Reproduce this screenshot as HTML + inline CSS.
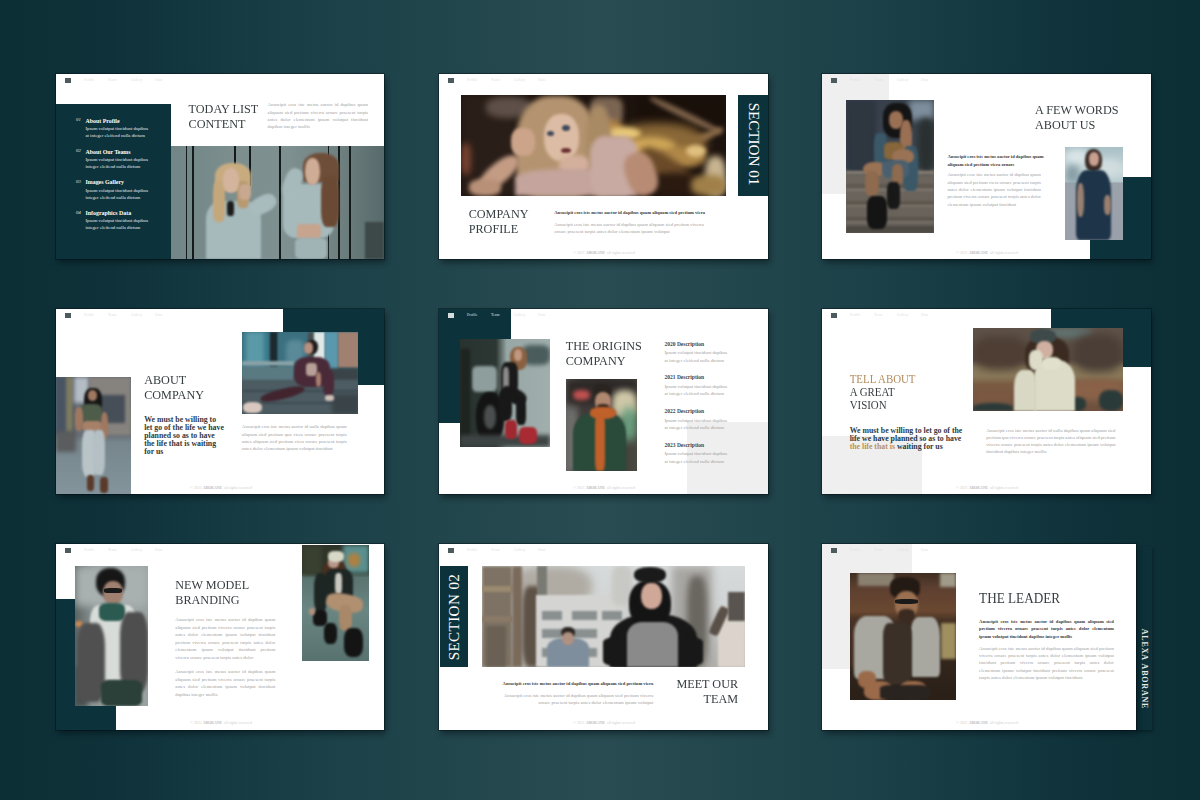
<!DOCTYPE html>
<html><head><meta charset="utf-8">
<style>
*{margin:0;padding:0;box-sizing:border-box}
html,body{width:1200px;height:800px;overflow:hidden}
body{font-family:"Liberation Serif",serif;position:relative;
background:linear-gradient(90deg,#0c2f36 0%,#0f323a 9%,#1c4148 28%,#284c51 50%,#1c4148 72%,#0f323a 91%,#0c2f36 100%);}
.s{position:absolute;width:329px;height:185px;background:#fff;overflow:visible;
box-shadow:0 0 0 1px rgba(0,10,15,.4),2px 4px 6px rgba(0,10,15,.45)}
.a{position:absolute}
.dk{position:absolute;background:#0c333c}
.lg{position:absolute;background:#efefef}
.logo{position:absolute;left:9px;top:4px;width:6px;height:5px;background:#4d5b5f}
.nav{position:absolute;top:3.6px;font-size:3.8px;line-height:5px;color:#e2e2e2;white-space:nowrap}
.ttl{position:absolute;font-size:12.2px;line-height:13.5px;color:#363e41;white-space:nowrap;transform:scaleY(1.08);transform-origin:0 0}
.p{position:absolute;margin-top:0.6px;font-size:4.75px;line-height:7.3px;color:#a0a0a0;white-space:nowrap}
.b{position:absolute;margin-top:0.6px;font-size:4.6px;line-height:7.4px;color:#3c3c3c;font-weight:bold;white-space:nowrap}
.q{position:absolute;font-size:7.8px;line-height:8.2px;color:#33393c;font-weight:bold;white-space:nowrap}
.ft{position:absolute;left:134px;top:177px;font-size:3.9px;line-height:5px;color:#cfcfcf;white-space:nowrap}
.ph{position:absolute;overflow:hidden}
.ph div{position:absolute}
.bl{filter:blur(1px)}
.bl2{filter:blur(2px)}
.sec{position:absolute;font-size:15.1px;line-height:15px;color:#fff;white-space:nowrap}
</style></head><body>
<!-- SLIDE 1 -->
<div class="s" style="left:56px;top:74px;width:328px">
  <div class="logo"></div>
  <div class="nav" style="left:28px">Profile</div><div class="nav" style="left:52px">Team</div><div class="nav" style="left:75px">Gallery</div><div class="nav" style="left:99px">Data</div>
  <div class="dk" style="left:0;top:29.5px;width:115px;height:155.5px"></div>
  <div class="ph" id="p1" style="left:115px;top:72px;width:213px;height:113px;background:linear-gradient(90deg,#728687 0%,#7c8e8e 30%,#7f9090 55%,#6e7f7f 80%,#58696b 100%)"><div style="left:14.6px;top:0px;width:1.8px;height:113px;background:#141a1a;filter:blur(0.3px);"></div><div style="left:21px;top:0px;width:1.8px;height:113px;background:#141a1a;filter:blur(0.3px);"></div><div style="left:63px;top:0px;width:1.8px;height:20px;background:#141a1a;filter:blur(0.3px);"></div><div style="left:78px;top:0px;width:1.8px;height:40px;background:#141a1a;filter:blur(0.3px);"></div><div style="left:108px;top:0px;width:1.8px;height:113px;background:#141a1a;filter:blur(0.3px);"></div><div style="left:156.7px;top:0px;width:1.8px;height:113px;background:#141a1a;filter:blur(0.3px);"></div><div style="left:166.8px;top:0px;width:1.8px;height:113px;background:#141a1a;filter:blur(0.3px);"></div><div style="left:177.8px;top:0px;width:1.8px;height:113px;background:#141a1a;filter:blur(0.3px);"></div><div style="left:194px;top:76px;width:19px;height:37px;background:#3d4848;filter:blur(1px);"></div><div style="left:35px;top:55px;width:55px;height:58px;background:#a6b9bb;border-radius:30% 30% 0 0;filter:blur(1px);"></div><div style="left:78px;top:50px;width:28px;height:17px;background:#a8bbbd;border-radius:40%;filter:blur(1px);transform:rotate(-28deg)"></div><div style="left:44px;top:17px;width:36px;height:28px;background:#c8ac80;border-radius:45% 45% 20% 20%;filter:blur(1px);"></div><div style="left:42px;top:35px;width:12px;height:41px;background:#c4a87c;border-radius:30%;filter:blur(1px);"></div><div style="left:66px;top:35px;width:12px;height:27px;background:#b89a70;border-radius:30%;filter:blur(1px);"></div><div style="left:52px;top:22px;width:16px;height:25px;background:#d4b49c;border-radius:45%;filter:blur(1px);"></div><div style="left:68px;top:38px;width:12px;height:16px;background:#c8a890;border-radius:40%;filter:blur(1px);"></div><div style="left:56px;top:55px;width:7px;height:15px;background:#1c1c1c;border-radius:30%;filter:blur(0.8px);"></div><div style="left:132px;top:7px;width:36px;height:29px;background:#6e4e38;border-radius:45% 45% 10% 10%;filter:blur(1px);"></div><div style="left:112px;top:38px;width:51px;height:54px;background:#a6babc;border-radius:25%;filter:blur(1px);"></div><div style="left:113px;top:22px;width:17px;height:30px;background:#a6babc;border-radius:40%;filter:blur(1px);transform:rotate(20deg)"></div><div style="left:150px;top:30px;width:18px;height:51px;background:#6a4a34;border-radius:30%;filter:blur(1px);"></div><div style="left:134px;top:12px;width:15px;height:27px;background:#ceac96;border-radius:45%;filter:blur(1px);"></div><div style="left:126px;top:78px;width:24px;height:15px;background:#c6a48e;border-radius:20%;filter:blur(1px);"></div><div style="left:124px;top:92px;width:32px;height:21px;background:#a0b4b6;border-radius:20%;filter:blur(1px);"></div></div><!--/p1-->
  <div class="ttl" style="left:132.6px;top:27.9px">TODAY LIST<br>CONTENT</div>
  <div class="p" style="left:211.6px;top:26.8px;"><div style="width:100.4px;white-space:nowrap;text-align:justify;text-align-last:justify;white-space:normal;word-spacing:-0.4px">Ansucipit eros iste metus auctor id dapibus quam</div><div style="width:100.4px;white-space:nowrap;text-align:justify;text-align-last:justify;white-space:normal;word-spacing:-0.4px">aliquam sied pretium viverra ornare praesent turpis</div><div style="width:100.4px;white-space:nowrap;text-align:justify;text-align-last:justify;white-space:normal;word-spacing:-0.4px">antes dolor elementum ipsum volutpat tincidunt</div><div style="width:100.4px;white-space:nowrap;">dapibus integer mollis</div></div>
  <div class="a" style="left:20.5px;top:43.9px;color:#fff;white-space:nowrap">
    <div style="position:absolute;left:-0.5px;top:-0.5px;font-size:4.8px;line-height:5px;font-style:italic;color:#dfe6e8">01</div>
    <div style="position:absolute;left:9px;top:0;font-size:5.9px;line-height:7px;font-weight:bold">About Profile</div>
    <div style="position:absolute;left:9px;top:8.3px;font-size:4.75px;line-height:6.9px;color:#e6ebec">Ipsum volutpat tincidunt dapibus<br>at integer eleifend nulla dictum</div>
  </div>
  <div class="a" style="left:20.5px;top:74.6px;color:#fff;white-space:nowrap">
    <div style="position:absolute;left:-0.5px;top:-0.5px;font-size:4.8px;line-height:5px;font-style:italic;color:#dfe6e8">02</div>
    <div style="position:absolute;left:9px;top:0;font-size:5.9px;line-height:7px;font-weight:bold">About Our Teams</div>
    <div style="position:absolute;left:9px;top:8.3px;font-size:4.75px;line-height:6.9px;color:#e6ebec">Ipsum volutpat tincidunt dapibus<br>integer eleifend nulla dictum</div>
  </div>
  <div class="a" style="left:20.5px;top:105.3px;color:#fff;white-space:nowrap">
    <div style="position:absolute;left:-0.5px;top:-0.5px;font-size:4.8px;line-height:5px;font-style:italic;color:#dfe6e8">03</div>
    <div style="position:absolute;left:9px;top:0;font-size:5.9px;line-height:7px;font-weight:bold">Images Gallery</div>
    <div style="position:absolute;left:9px;top:8.3px;font-size:4.75px;line-height:6.9px;color:#e6ebec">Ipsum volutpat tincidunt dapibus<br>integer eleifend nulla dictum</div>
  </div>
  <div class="a" style="left:20.5px;top:136px;color:#fff;white-space:nowrap">
    <div style="position:absolute;left:-0.5px;top:-0.5px;font-size:4.8px;line-height:5px;font-style:italic;color:#dfe6e8">04</div>
    <div style="position:absolute;left:9px;top:0;font-size:5.9px;line-height:7px;font-weight:bold">Infographics Data</div>
    <div style="position:absolute;left:9px;top:8.3px;font-size:4.75px;line-height:6.9px;color:#e6ebec">Ipsum volutpat tincidunt dapibus<br>integer eleifend nulla dictum</div>
  </div>
</div>

<!-- SLIDE 2 -->
<div class="s" style="left:439px;top:74px">
  <div class="logo"></div>
  <div class="nav" style="left:28px">Profile</div><div class="nav" style="left:52px">Team</div><div class="nav" style="left:75px">Gallery</div><div class="nav" style="left:99px">Data</div>
  <div class="ph" id="p2" style="left:21.5px;top:21.4px;width:265px;height:101px;background:#1e140f"><div style="left:0px;top:0px;width:55px;height:101px;background:#2a1e18;filter:blur(3px);"></div><div style="left:25px;top:2px;width:46px;height:21px;background:#5e5048;border-radius:40%;filter:blur(3px);"></div><div style="left:0px;top:48px;width:10px;height:32px;background:#7a4430;border-radius:40%;filter:blur(3px);"></div><div style="left:129px;top:2px;width:33px;height:28px;background:#7a6452;border-radius:30%;filter:blur(2.5px);"></div><div style="left:135px;top:25px;width:27px;height:17px;background:#b88a4c;border-radius:40%;filter:blur(3px);"></div><div style="left:175px;top:0px;width:90px;height:40px;background:#1a100a;filter:blur(3px);"></div><div style="left:185px;top:17px;width:80px;height:7px;background:#7a6048;border-radius:40%;filter:blur(2px);transform:rotate(26deg)"></div><div style="left:205px;top:42px;width:60px;height:8px;background:#8a6a48;border-radius:40%;filter:blur(2px);transform:rotate(-25deg)"></div><div style="left:150px;top:28px;width:95px;height:44px;background:#8a6838;border-radius:45%;filter:blur(5px);"></div><div style="left:145px;top:32px;width:35px;height:13px;background:#e8c878;border-radius:50%;filter:blur(2.5px);"></div><div style="left:165px;top:42px;width:50px;height:20px;background:#d0a858;border-radius:50%;filter:blur(3px);"></div><div style="left:195px;top:52px;width:50px;height:20px;background:#b08848;border-radius:45%;filter:blur(3px);"></div><div style="left:225px;top:50px;width:20px;height:12px;background:#e0c080;border-radius:50%;filter:blur(2px);"></div><div style="left:175px;top:62px;width:60px;height:22px;background:#6a4a28;border-radius:40%;filter:blur(3px);transform:rotate(35deg)"></div><div style="left:190px;top:78px;width:50px;height:23px;background:#2a1a10;border-radius:40%;filter:blur(3px);"></div><div style="left:244px;top:61px;width:21px;height:40px;background:#c8b490;border-radius:40%;filter:blur(3px);"></div><div style="left:230px;top:80px;width:35px;height:21px;background:#a08048;border-radius:40%;filter:blur(3px);"></div><div style="left:55px;top:1px;width:81px;height:101px;background:#b49470;border-radius:42% 42% 30% 30%;filter:blur(2.5px);"></div><div style="left:125px;top:10px;width:25px;height:90px;background:#a88a64;border-radius:40%;filter:blur(2.5px);"></div><div style="left:83px;top:19px;width:35px;height:47px;background:#dcbca4;border-radius:45%;filter:blur(1.5px);"></div><div style="left:86px;top:36px;width:7px;height:5px;background:#40485a;border-radius:50%;filter:blur(0.8px);"></div><div style="left:101px;top:30px;width:8px;height:6px;background:#40485a;border-radius:50%;filter:blur(0.8px);"></div><div style="left:100px;top:53px;width:10px;height:5px;background:#6a2e30;border-radius:50%;filter:blur(0.8px);"></div><div style="left:98px;top:60px;width:30px;height:19px;background:#d4b09c;border-radius:40%;filter:blur(2px);"></div><div style="left:54px;top:74px;width:123px;height:27px;background:#c4a49c;border-radius:35% 35% 0 0;filter:blur(2px);"></div><div style="left:129px;top:41px;width:48px;height:60px;background:#c8aaa2;border-radius:30%;filter:blur(2px);"></div><div style="left:165px;top:57px;width:30px;height:44px;background:#b88c74;border-radius:40%;filter:blur(2px);transform:rotate(-20deg)"></div><div style="left:50px;top:33px;width:24.5px;height:28px;background:#cca48a;border-radius:40%;filter:blur(1.5px);"></div><div style="left:14px;top:68px;width:48px;height:20px;background:#c49c84;border-radius:45%;filter:blur(2px);transform:rotate(-40deg)"></div><div style="left:8px;top:84px;width:32px;height:17px;background:#b89078;border-radius:40%;filter:blur(2px);"></div></div><!--/p2-->
  <div class="dk" style="left:299px;top:21.4px;width:30px;height:101px"></div>
  <div class="sec" style="left:314px;top:70.3px;transform:translate(-50%,-50%) rotate(90deg)">SECTION 01</div>
  <div class="ttl" style="left:29.7px;top:132.6px">COMPANY<br>PROFILE</div>
  <div class="b" style="left:115.3px;top:134.8px">Ansucipit eros iste metus auctor id dapibus quam aliquam sied pretium viera</div>
  <div class="p" style="left:115.3px;top:146.1px;line-height:7.6px">Ansucipit eros iste metus auctor id dapibus quam aliquam sied pretium viverra<br>ornare praesent turpis antes dolor elementum ipsum volutpat</div>
  <div class="ft">© 2021 <b style="color:#bdbdbd">ABORANE</b> &nbsp;all rights reserved</div>
</div>

<!-- SLIDE 3 -->
<div class="s" style="left:822px;top:74px">
  <div class="lg" style="left:0;top:0;width:67px;height:120px"></div>
  <div class="logo"></div>
  <div class="nav" style="left:28px">Profile</div><div class="nav" style="left:52px">Team</div><div class="nav" style="left:75px">Gallery</div><div class="nav" style="left:99px">Data</div>
  <div class="ph" id="p3a" style="left:23.6px;top:26px;width:88px;height:133px;background:linear-gradient(180deg,#363f4a 0%,#3c4650 50%,#6c665e 54%,#67615a 100%)"><div style="left:0px;top:0px;width:30px;height:72px;background:#2e3640;filter:blur(2px);"></div><div style="left:63px;top:0px;width:25px;height:20px;background:#7e8e9c;filter:blur(3px);"></div><div style="left:72px;top:18px;width:16px;height:54px;background:#2a3030;border-radius:30%;filter:blur(3px);"></div><div style="left:0px;top:71px;width:88px;height:3px;background:#847d74;filter:blur(0.8px);"></div><div style="left:0px;top:84px;width:88px;height:4px;background:#5e5850;filter:blur(1px);"></div><div style="left:0px;top:89px;width:88px;height:2px;background:#7e776e;filter:blur(0.8px);"></div><div style="left:0px;top:101px;width:88px;height:4px;background:#5c564e;filter:blur(1px);"></div><div style="left:0px;top:105px;width:88px;height:2px;background:#7a736a;filter:blur(0.8px);"></div><div style="left:0px;top:117px;width:88px;height:4px;background:#5a544c;filter:blur(1px);"></div><div style="left:0px;top:121px;width:88px;height:2px;background:#76706a;filter:blur(0.8px);"></div><div style="left:0px;top:126px;width:88px;height:7px;background:#4e4a44;filter:blur(1px);"></div><div style="left:37.7px;top:3px;width:29px;height:34.5px;background:#141414;border-radius:40%;filter:blur(1.2px);"></div><div style="left:43px;top:11px;width:14.6px;height:18px;background:#9a7054;border-radius:45%;filter:blur(0.8px);"></div><div style="left:54px;top:20px;width:12.7px;height:34.7px;background:#9a7054;border-radius:40%;filter:blur(0.8px);"></div><div style="left:28.6px;top:33px;width:12.7px;height:34.4px;background:#3a5868;border-radius:30%;filter:blur(1px);"></div><div style="left:57.6px;top:45.6px;width:14.4px;height:45.4px;background:#3a5868;border-radius:30%;filter:blur(1px);"></div><div style="left:38.6px;top:42px;width:19px;height:18px;background:#86663a;border-radius:30%;filter:blur(0.8px);"></div><div style="left:46.7px;top:49px;width:21.8px;height:14.8px;background:#9a7254;border-radius:45%;filter:blur(1px);"></div><div style="left:17.8px;top:62px;width:23.5px;height:14.4px;background:#9a7254;border-radius:45%;filter:blur(1px);"></div><div style="left:36px;top:60px;width:27px;height:18px;background:#4a6070;border-radius:30%;filter:blur(1px);"></div><div style="left:19.6px;top:71px;width:13.4px;height:25.4px;background:#8e6a4e;border-radius:35%;filter:blur(1px);"></div><div style="left:46.7px;top:63.8px;width:10.9px;height:21.7px;background:#8e6a4e;border-radius:35%;filter:blur(1px);"></div><div style="left:21.4px;top:96.4px;width:19.9px;height:32.6px;background:#141414;border-radius:30%;filter:blur(1px);"></div><div style="left:41.3px;top:82px;width:12.7px;height:27px;background:#181818;border-radius:30%;filter:blur(1px);"></div></div><!--/p3a-->
  <div class="dk" style="left:268px;top:103px;width:61px;height:82px"></div>
  <div class="ph" id="p3b" style="left:243.2px;top:73.2px;width:57.5px;height:92.8px;background:linear-gradient(180deg,#a8c0c6 0%,#c8d8da 25%,#b8ccd0 37%,#9aa2ac 39%,#9aa0aa 100%)"><div style="left:0px;top:2px;width:25px;height:16px;background:#d8e4e6;border-radius:50%;filter:blur(3px);"></div><div style="left:30px;top:12px;width:27px;height:18px;background:#d0dcde;border-radius:50%;filter:blur(3px);"></div><div style="left:0px;top:18px;width:15px;height:18px;background:#8aa0a8;border-radius:40%;filter:blur(3px);"></div><div style="left:20px;top:2px;width:17px;height:23px;background:#3a2a24;border-radius:45%;filter:blur(1px);"></div><div style="left:23.5px;top:5px;width:10px;height:14px;background:#c8a090;border-radius:45%;filter:blur(0.8px);"></div><div style="left:11px;top:23px;width:35px;height:70px;background:#1e3448;border-radius:30% 30% 10% 10%;filter:blur(1.2px);"></div><div style="left:12px;top:36px;width:7px;height:34px;background:#9a8070;border-radius:40%;filter:blur(0.8px);"></div><div style="left:39px;top:48px;width:7px;height:20px;background:#9a8070;border-radius:40%;filter:blur(0.8px);"></div></div><!--/p3b-->
  <div class="ttl" style="left:213px;top:29px">A FEW WORDS<br>ABOUT US</div>
  <div class="b" style="left:125.4px;top:78.5px"><div style="width:96.3px;white-space:nowrap;text-align:justify;text-align-last:justify;white-space:normal;word-spacing:-0.4px">Ansucipit eros iste metus auctor id dapibus quam</div><div style="width:96.3px;white-space:nowrap;">aliquam sied pretium viera ornare</div></div>
  <div class="p" style="left:125.4px;top:96.85px"><div style="width:93.5px;white-space:nowrap;text-align:justify;text-align-last:justify;white-space:normal;word-spacing:-0.4px">Ansucipit eros iste metus auctor id dapibus quam</div><div style="width:93.5px;white-space:nowrap;text-align:justify;text-align-last:justify;white-space:normal;word-spacing:-0.4px">aliquam sied pretium viera ornare praesent turpis</div><div style="width:93.5px;white-space:nowrap;text-align:justify;text-align-last:justify;white-space:normal;word-spacing:-0.4px">antes dolor elementum ipsum volutpat tincidunt</div><div style="width:93.5px;white-space:nowrap;text-align:justify;text-align-last:justify;white-space:normal;word-spacing:-0.4px">pretium viverra ornare praesent turpis antes dolor</div><div style="width:93.5px;white-space:nowrap;">elementum ipsum volutpat tincidunt</div></div>
  <div class="ft">© 2021 <b style="color:#bdbdbd">ABORANE</b> &nbsp;all rights reserved</div>
</div>

<!-- SLIDE 4 -->
<div class="s" style="left:56px;top:309px;width:328px">
  <div class="logo"></div>
  <div class="nav" style="left:28px">Profile</div><div class="nav" style="left:52px">Team</div><div class="nav" style="left:75px">Gallery</div><div class="nav" style="left:99px">Data</div>
  <div class="dk" style="left:226.6px;top:0;width:101.4px;height:76px"></div>
  <div class="ph" id="p4a" style="left:0;top:68.3px;width:75px;height:116.7px;background:linear-gradient(180deg,#5a6470 0%,#6a7078 50%,#76868c 56%,#84949c 100%)"><div style="left:0px;top:0px;width:18px;height:58px;background:#485462;filter:blur(1.5px);"></div><div style="left:10px;top:0px;width:7px;height:56px;background:#7e7a60;filter:blur(1.5px);"></div><div style="left:18px;top:0px;width:15px;height:26px;background:#b4bcc4;filter:blur(2px);"></div><div style="left:33px;top:0px;width:42px;height:58px;background:#86827e;filter:blur(1.5px);"></div><div style="left:42px;top:18px;width:27px;height:28px;background:#464e58;filter:blur(1.5px);"></div><div style="left:0px;top:54px;width:20px;height:21px;background:#5a5c5e;filter:blur(2px);"></div><div style="left:28px;top:11px;width:18px;height:26px;background:#161616;border-radius:40%;filter:blur(1px);"></div><div style="left:32px;top:13px;width:9px;height:11px;background:#a07860;border-radius:45%;filter:blur(0.8px);"></div><div style="left:24px;top:27px;width:22px;height:19px;background:#4e5c4a;border-radius:30%;filter:blur(1px);"></div><div style="left:26px;top:44px;width:20px;height:10px;background:#a88068;border-radius:30%;filter:blur(1px);"></div><div style="left:19px;top:30px;width:8px;height:24px;background:#a07860;border-radius:40%;filter:blur(1px);"></div><div style="left:45px;top:35px;width:7px;height:27px;background:#a07860;border-radius:40%;filter:blur(1px);"></div><div style="left:26px;top:53px;width:15px;height:47px;background:#b8c4c8;border-radius:30%;filter:blur(1px);"></div><div style="left:37px;top:53px;width:12px;height:45px;background:#b4c0c4;border-radius:30%;filter:blur(1px);"></div><div style="left:31px;top:98px;width:7px;height:16px;background:#5a3a2a;border-radius:30%;filter:blur(0.8px);"></div><div style="left:44px;top:100px;width:8px;height:16px;background:#5a3a2a;border-radius:30%;filter:blur(0.8px);"></div></div><!--/p4a-->
  <div class="ph" id="p4b" style="left:185.9px;top:22.9px;width:116.6px;height:82.4px;background:linear-gradient(180deg,#3a6a78 0%,#3a6a78 50%,#4a5a60 54%,#465258 100%)"><div style="left:0px;top:0px;width:28px;height:43px;background:#3a7888;filter:blur(1.5px);"></div><div style="left:4px;top:0px;width:18px;height:36px;background:#5a9aa8;filter:blur(2px);"></div><div style="left:28px;top:0px;width:8px;height:41px;background:#1c2a30;filter:blur(1.2px);"></div><div style="left:36px;top:0px;width:30px;height:40px;background:#3c7080;filter:blur(1.5px);"></div><div style="left:44px;top:8px;width:18px;height:26px;background:#5a8a98;border-radius:30%;filter:blur(2px);"></div><div style="left:66px;top:0px;width:6px;height:40px;background:#4a5050;filter:blur(1px);"></div><div style="left:72px;top:0px;width:11px;height:29px;background:#e0e8e8;filter:blur(1.2px);"></div><div style="left:83px;top:0px;width:13px;height:41px;background:#5a98ae;filter:blur(1.2px);"></div><div style="left:96px;top:0px;width:21px;height:36px;background:#a08070;filter:blur(1.2px);"></div><div style="left:86px;top:36px;width:31px;height:13px;background:#3a4448;filter:blur(1.5px);"></div><div style="left:0px;top:29px;width:52px;height:5px;background:#8aa2a8;filter:blur(1px);"></div><div style="left:0px;top:34px;width:52px;height:15px;background:#5a7a82;filter:blur(1.5px);"></div><div style="left:0px;top:48px;width:117px;height:34.4px;background:#4c5c62;filter:blur(1.5px);"></div><div style="left:0px;top:58px;width:117px;height:2px;background:#3e4c52;filter:blur(1px);"></div><div style="left:0px;top:70px;width:117px;height:2px;background:#3e4c52;filter:blur(1px);"></div><div style="left:90px;top:62px;width:27px;height:20.4px;background:#3a4448;filter:blur(2px);"></div><div style="left:52.5px;top:25px;width:35.5px;height:30px;background:#4a2a38;border-radius:35%;filter:blur(1px);"></div><div style="left:81px;top:38px;width:10.7px;height:26px;background:#4a2a38;border-radius:35%;filter:blur(1px);"></div><div style="left:18px;top:57px;width:45px;height:10px;background:#42242f;border-radius:45%;filter:blur(1px);transform:rotate(-14deg)"></div><div style="left:64px;top:8px;width:12px;height:14px;background:#1e1a1a;border-radius:45%;filter:blur(0.8px);"></div><div style="left:62px;top:10px;width:9px;height:12px;background:#b89080;border-radius:45%;filter:blur(0.8px);"></div><div style="left:64px;top:31px;width:11px;height:13px;background:#b8a098;border-radius:30%;filter:blur(0.8px);"></div><div style="left:74px;top:40.6px;width:5px;height:14.4px;background:#a88070;border-radius:40%;filter:blur(0.8px);"></div><div style="left:1.4px;top:70px;width:19px;height:11px;background:#d8c8c0;border-radius:40%;filter:blur(1px);"></div><div style="left:83.4px;top:63px;width:8.3px;height:6px;background:#d0c0b8;border-radius:40%;filter:blur(0.8px);"></div></div><!--/p4b-->
  <div class="ttl" style="left:88.2px;top:64.3px">ABOUT<br>COMPANY</div>
  <div class="q" style="left:88.2px;top:106.5px">We must be willing to<br>let go of the life <span style="color:#1c3a44">we have</span><br>planned so as to have<br>the life that is <span style="color:#1c3a44">waiting</span><br>for us</div>
  <div class="p" style="left:185.8px;top:113.8px"><div style="width:105px;white-space:nowrap;text-align:justify;text-align-last:justify;white-space:normal;word-spacing:-0.4px">Ansucipit eros iste metus auctor id nulla dapibus quam</div><div style="width:105px;white-space:nowrap;text-align:justify;text-align-last:justify;white-space:normal;word-spacing:-0.4px">aliquam sied pretium qua viera ornare praesent turpis</div><div style="width:105px;white-space:nowrap;text-align:justify;text-align-last:justify;white-space:normal;word-spacing:-0.4px">antes aliquam sied pretium viera ornare praesent turpis</div><div style="width:105px;white-space:nowrap;">antes dolor elementum ipsum volutpat tincidunt</div></div>
  <div class="ft">© 2021 <b style="color:#bdbdbd">ABORANE</b> &nbsp;all rights reserved</div>
</div>

<!-- SLIDE 5 -->
<div class="s" style="left:439px;top:309px">
  <div class="dk" style="left:0;top:0;width:72px;height:113.6px"></div>
  <div class="logo" style="background:#d5dcde"></div>
  <div class="nav" style="left:28px;color:#d8e0e2">Profile</div><div class="nav" style="left:52px;color:#d8e0e2">Team</div><div class="nav" style="left:75px">Gallery</div><div class="nav" style="left:99px">Data</div>
  <div class="lg" style="left:247.5px;top:112.8px;width:81.5px;height:72.2px"></div>
  <div class="ph" id="p5a" style="left:20.7px;top:30px;width:90px;height:108.3px;background:linear-gradient(90deg,#28322e 0%,#2c3632 40%,#98a8a6 52%,#a0aeac 100%)"><div style="left:62px;top:6px;width:28px;height:20px;background:#4a5c5c;border-radius:30%;filter:blur(2px);"></div><div style="left:12px;top:27px;width:25px;height:26px;background:#8e9e9c;border-radius:20%;filter:blur(1.5px);"></div><div style="left:0px;top:10px;width:10px;height:90px;background:#1e2420;filter:blur(1.5px);"></div><div style="left:16px;top:53px;width:28px;height:51px;background:#141414;border-radius:45%;filter:blur(1.2px);"></div><div style="left:24px;top:66px;width:12px;height:24px;background:#4a4e4e;border-radius:45%;filter:blur(1.5px);"></div><div style="left:0px;top:96px;width:90px;height:12.3px;background:#3e4444;filter:blur(2px);"></div><div style="left:50px;top:8px;width:17px;height:23px;background:#8a6040;border-radius:40%;filter:blur(1px);"></div><div style="left:54px;top:10px;width:8px;height:12px;background:#c09880;border-radius:45%;filter:blur(0.8px);"></div><div style="left:41px;top:23px;width:17px;height:33px;background:#1a1a1a;border-radius:30%;filter:blur(1px);"></div><div style="left:43px;top:28px;width:6px;height:27px;background:#8a8a8a;border-radius:30%;filter:blur(1px);"></div><div style="left:38px;top:52px;width:14px;height:30px;background:#181818;border-radius:30%;filter:blur(1px);"></div><div style="left:40px;top:49px;width:27px;height:15px;background:#181818;border-radius:40%;filter:blur(1px);transform:rotate(25deg)"></div><div style="left:56px;top:60px;width:10px;height:26px;background:#181818;border-radius:30%;filter:blur(1px);"></div><div style="left:45px;top:81px;width:12px;height:19px;background:#a02830;border-radius:30%;filter:blur(1px);"></div><div style="left:59px;top:88px;width:18px;height:17px;background:#a82a32;border-radius:30%;filter:blur(1px);"></div></div><!--/p5a-->
  <div class="ph" id="p5b" style="left:127px;top:69.8px;width:70.6px;height:91.9px;background:linear-gradient(90deg,#626260 0%,#403c3a 22%,#3a3634 60%,#4a4a40 100%)"><div style="left:0px;top:0px;width:70.6px;height:25px;background:#2e2a28;filter:blur(3px);"></div><div style="left:7px;top:11px;width:17px;height:10px;background:#c05050;border-radius:40%;filter:blur(2px);"></div><div style="left:46px;top:11px;width:24.6px;height:28px;background:#d0c8a8;border-radius:40%;filter:blur(3px);"></div><div style="left:55px;top:28px;width:15.6px;height:34px;background:#6aa080;border-radius:40%;filter:blur(4px);"></div><div style="left:0px;top:30px;width:11px;height:62px;background:#6e6e6c;filter:blur(3px);"></div><div style="left:28px;top:5px;width:17px;height:13px;background:#2a2420;border-radius:40%;filter:blur(1px);"></div><div style="left:29px;top:13px;width:16px;height:19px;background:#b08870;border-radius:45%;filter:blur(1px);"></div><div style="left:31px;top:25px;width:12px;height:8px;background:#3a2a22;border-radius:40%;filter:blur(1px);"></div><div style="left:7px;top:34px;width:53px;height:58px;background:#2a4a3a;border-radius:35% 35% 0 0;filter:blur(1.2px);"></div><div style="left:24px;top:28px;width:26px;height:12px;background:#c0602a;border-radius:40%;filter:blur(1px);"></div><div style="left:29px;top:36px;width:10px;height:56px;background:#c0602a;border-radius:20%;filter:blur(1px);"></div></div><!--/p5b-->
  <div class="ttl" style="left:126.7px;top:30.1px">THE ORIGINS<br>COMPANY</div>
  <div class="a" style="left:225.5px;top:31.1px">
    <div class="b" style="left:0;top:0;font-size:5.5px;line-height:7.5px;color:#444">2020 Description</div>
    <div class="p" style="left:0;top:8.7px;line-height:7.4px">Ipsum volutpat tincidunt dapibus<br>at integer eleifend nulla dictum</div>
  </div>
  <div class="a" style="left:225.5px;top:64.8px">
    <div class="b" style="left:0;top:0;font-size:5.5px;line-height:7.5px;color:#444">2021 Description</div>
    <div class="p" style="left:0;top:8.7px;line-height:7.4px">Ipsum volutpat tincidunt dapibus<br>at integer eleifend nulla dictum</div>
  </div>
  <div class="a" style="left:225.5px;top:98.5px">
    <div class="b" style="left:0;top:0;font-size:5.5px;line-height:7.5px;color:#444">2022 Description</div>
    <div class="p" style="left:0;top:8.7px;line-height:7.4px">Ipsum volutpat tincidunt dapibus<br>at integer eleifend nulla dictum</div>
  </div>
  <div class="a" style="left:225.5px;top:132.2px">
    <div class="b" style="left:0;top:0;font-size:5.5px;line-height:7.5px;color:#444">2023 Description</div>
    <div class="p" style="left:0;top:8.7px;line-height:7.4px">Ipsum volutpat tincidunt dapibus<br>at integer eleifend nulla dictum</div>
  </div>
  <div class="ft">© 2021 <b style="color:#bdbdbd">ABORANE</b> &nbsp;all rights reserved</div>
</div>

<!-- SLIDE 6 -->
<div class="s" style="left:822px;top:309px">
  <div class="logo"></div>
  <div class="nav" style="left:28px">Profile</div><div class="nav" style="left:52px">Team</div><div class="nav" style="left:75px">Gallery</div><div class="nav" style="left:99px">Data</div>
  <div class="dk" style="left:229px;top:0;width:100px;height:57.5px"></div>
  <div class="lg" style="left:0;top:127.3px;width:99.7px;height:57.7px"></div>
  <div class="ph" id="p6" style="left:151.3px;top:18.6px;width:149.6px;height:83.2px;background:linear-gradient(180deg,#5e5248 0%,#5a4c42 38%,#86785a 47%,#8a7a5a 58%,#7a5c42 68%,#6e5040 100%)"><div style="left:70px;top:0px;width:50px;height:10px;background:#607472;border-radius:40%;filter:blur(3px);"></div><div style="left:0px;top:8px;width:55px;height:34px;background:#4e3e34;border-radius:40%;filter:blur(4px);"></div><div style="left:100px;top:6px;width:49.6px;height:38px;background:#4a3e36;border-radius:40%;filter:blur(4px);"></div><div style="left:95px;top:52px;width:54.6px;height:20px;background:#8a6248;border-radius:30%;filter:blur(3px);"></div><div style="left:0px;top:62px;width:40px;height:14px;background:#7a5842;border-radius:30%;filter:blur(3px);"></div><div style="left:0px;top:75px;width:40px;height:8.2px;background:#2a3a38;border-radius:50% 50% 0 0;filter:blur(1.5px);"></div><div style="left:126px;top:62px;width:23.6px;height:21.2px;background:#2a3a38;border-radius:40%;filter:blur(1.5px);"></div><div style="left:96px;top:69px;width:17px;height:14.2px;background:#2a3a38;border-radius:40%;filter:blur(1.5px);"></div><div style="left:52px;top:9px;width:44px;height:39px;background:#3a2a20;border-radius:40%;filter:blur(1.5px);"></div><div style="left:57px;top:1px;width:25.5px;height:15px;background:#3e4a4a;border-radius:45%;filter:blur(1px);"></div><div style="left:63px;top:13px;width:17px;height:18px;background:#d0b0a0;border-radius:45%;filter:blur(1px);"></div><div style="left:60.5px;top:32px;width:41.5px;height:51.2px;background:#dcdcc8;border-radius:35% 40% 0 0;filter:blur(1.2px);"></div><div style="left:41px;top:42px;width:22px;height:41.2px;background:#d8d8c4;border-radius:40% 30% 0 0;filter:blur(1.2px);"></div><div style="left:56px;top:22.7px;width:14px;height:19.3px;background:#dcdcc8;border-radius:40%;filter:blur(1px);"></div><div style="left:69px;top:29.6px;width:19px;height:12.4px;background:#e0e0cc;border-radius:40%;filter:blur(1px);"></div></div><!--/p6-->
  <div class="ttl" style="left:27.7px;top:62.8px;font-size:10.9px;line-height:12.2px"><span style="color:#b38b5c">TELL ABOUT</span><br>A GREAT<br>VISION</div>
  <div class="q" style="left:27.7px;top:117.8px">We must be willing to let go of the<br>life <span style="color:#1c3a44">we have planned</span> so as to have<br><span style="color:#b8915f">the life that is</span> <span style="color:#1c3a44">waiting</span> for us</div>
  <div class="p" style="left:164.2px;top:117px"><div style="width:129.3px;white-space:nowrap;text-align:justify;text-align-last:justify;white-space:normal;word-spacing:-0.4px">Ansucipit eros iste metus auctor id nulla dapibus quam aliquam sied</div><div style="width:129.3px;white-space:nowrap;text-align:justify;text-align-last:justify;white-space:normal;word-spacing:-0.4px">pretium qua viverra ornare praesent turpis antes aliquam sied pretium</div><div style="width:129.3px;white-space:nowrap;text-align:justify;text-align-last:justify;white-space:normal;word-spacing:-0.4px">viverra ornare praesent turpis antes dolor elementum ipsum volutpat</div><div style="width:129.3px;white-space:nowrap;">tincidunt dapibus integer mollis</div></div>
  <div class="ft">© 2021 <b style="color:#bdbdbd">ABORANE</b> &nbsp;all rights reserved</div>
</div>

<!-- SLIDE 7 -->
<div class="s" style="left:56px;top:544px;width:328px;height:186px">
  <div class="logo"></div>
  <div class="nav" style="left:28px">Profile</div><div class="nav" style="left:52px">Team</div><div class="nav" style="left:75px">Gallery</div><div class="nav" style="left:99px">Data</div>
  <div class="dk" style="left:0;top:55px;width:60px;height:131px"></div>
  <div class="ph" id="p7a" style="left:18.8px;top:22.3px;width:73px;height:140px;background:linear-gradient(90deg,#5a6262 0%,#8a9292 25%,#a0a8a8 60%,#98a0a0 100%)"><div style="left:0px;top:0px;width:73px;height:40px;background:#a8b0b0;filter:blur(4px);"></div><div style="left:0px;top:55px;width:8px;height:6px;background:#d08a50;border-radius:50%;filter:blur(1.5px);"></div><div style="left:0px;top:100px;width:12px;height:40px;background:#4a5050;filter:blur(2px);"></div><div style="left:21px;top:2px;width:29px;height:29px;background:#161616;border-radius:45%;filter:blur(1.5px);"></div><div style="left:28px;top:15px;width:20px;height:24px;background:#a08070;border-radius:45%;filter:blur(1px);"></div><div style="left:29px;top:22px;width:18px;height:5px;background:#1a1a1a;border-radius:30%;filter:blur(0.5px);"></div><div style="left:15px;top:39px;width:46px;height:75px;background:#d8dcd8;border-radius:20%;filter:blur(1px);"></div><div style="left:24px;top:37px;width:26px;height:18px;background:#2a5a50;border-radius:30%;filter:blur(1px);"></div><div style="left:2px;top:57px;width:28px;height:79px;background:#505050;border-radius:30%;filter:blur(1.5px);"></div><div style="left:45px;top:46px;width:28px;height:81px;background:#4e4e4e;border-radius:30%;filter:blur(1.5px);"></div><div style="left:26px;top:114px;width:41px;height:26px;background:#2a4038;border-radius:20%;filter:blur(1px);"></div></div><!--/p7a-->
  <div class="ph" id="p7b" style="left:246.3px;top:0.5px;width:67.2px;height:116.5px;background:linear-gradient(180deg,#2e3428 0%,#2e3428 23%,#5a7470 28%,#6a8682 55%,#587270 100%)"><div style="left:41px;top:0px;width:26.2px;height:28px;background:#5a9090;filter:blur(2px);"></div><div style="left:46px;top:8px;width:12px;height:14px;background:#b08040;border-radius:40%;filter:blur(2px);"></div><div style="left:0px;top:0px;width:20px;height:30px;background:#3a4030;filter:blur(2px);"></div><div style="left:20px;top:15px;width:24.7px;height:34px;background:#4a3020;border-radius:40%;filter:blur(1.2px);"></div><div style="left:11.4px;top:28px;width:13.6px;height:40.6px;background:#1e2624;border-radius:35%;filter:blur(1px);"></div><div style="left:22px;top:24.7px;width:29px;height:35.8px;background:#1e2624;border-radius:30%;filter:blur(1px);"></div><div style="left:33px;top:28px;width:7px;height:21px;background:#c8c8c0;border-radius:30%;filter:blur(1px);"></div><div style="left:26px;top:13px;width:10.6px;height:10px;background:#b8988a;border-radius:45%;filter:blur(0.8px);"></div><div style="left:26px;top:6.8px;width:15.5px;height:10.6px;background:#d8d8c8;border-radius:40%;filter:blur(0.8px);"></div><div style="left:23.6px;top:49px;width:37.4px;height:18px;background:#b09070;border-radius:40%;filter:blur(1px);transform:rotate(10deg)"></div><div style="left:36.6px;top:60px;width:13px;height:26.5px;background:#a88868;border-radius:35%;filter:blur(1px);"></div><div style="left:22px;top:78px;width:13px;height:21.5px;background:#141414;border-radius:35%;filter:blur(1px);"></div><div style="left:41.5px;top:83px;width:19.5px;height:29.5px;background:#141414;border-radius:35%;filter:blur(1px);"></div><div style="left:10.6px;top:65px;width:14.4px;height:16.6px;background:#141414;border-radius:30%;filter:blur(1px);"></div><div style="left:7px;top:63px;width:6px;height:7px;background:#b09080;border-radius:40%;filter:blur(0.8px);"></div></div><!--/p7b-->
  <div class="ttl" style="left:119.3px;top:33.6px">NEW MODEL<br>BRANDING</div>
  <div class="p" style="left:119.3px;top:71.9px;line-height:7.42px"><div style="width:100.1px;white-space:nowrap;text-align:justify;text-align-last:justify;white-space:normal;word-spacing:-0.4px">Ansucipit eros iste metus auctor id dapibus quam</div><div style="width:100.1px;white-space:nowrap;text-align:justify;text-align-last:justify;white-space:normal;word-spacing:-0.4px">aliquam sied pretium viverra ornare praesent turpis</div><div style="width:100.1px;white-space:nowrap;text-align:justify;text-align-last:justify;white-space:normal;word-spacing:-0.4px">antes dolor elementum ipsum volutpat tincidunt</div><div style="width:100.1px;white-space:nowrap;text-align:justify;text-align-last:justify;white-space:normal;word-spacing:-0.4px">pretium viverra ornare praesent turpis antes dolor</div><div style="width:100.1px;white-space:nowrap;text-align:justify;text-align-last:justify;white-space:normal;word-spacing:-0.4px">elementum ipsum volutpat tincidunt pretium</div><div style="width:100.1px;white-space:nowrap;">viverra ornare praesent turpis antes dolor</div></div>
  <div class="p" style="left:119.3px;top:123.9px;line-height:7.42px"><div style="width:100.1px;white-space:nowrap;text-align:justify;text-align-last:justify;white-space:normal;word-spacing:-0.4px">Ansucipit eros iste metus auctor id dapibus quam</div><div style="width:100.1px;white-space:nowrap;text-align:justify;text-align-last:justify;white-space:normal;word-spacing:-0.4px">aliquam sied pretium viverra ornare praesent turpis</div><div style="width:100.1px;white-space:nowrap;text-align:justify;text-align-last:justify;white-space:normal;word-spacing:-0.4px">antes dolor elementum ipsum volutpat tincidunt</div><div style="width:100.1px;white-space:nowrap;">dapibus integer mollis</div></div>
  <div class="ft">© 2021 <b style="color:#bdbdbd">ABORANE</b> &nbsp;all rights reserved</div>
</div>

<!-- SLIDE 8 -->
<div class="s" style="left:439px;top:544px;height:186px">
  <div class="logo"></div>
  <div class="nav" style="left:28px">Profile</div><div class="nav" style="left:52px">Team</div><div class="nav" style="left:75px">Gallery</div><div class="nav" style="left:99px">Data</div>
  <div class="dk" style="left:1px;top:21.6px;width:28.3px;height:101px"></div>
  <div class="sec" style="left:15.3px;top:73px;letter-spacing:0.4px;transform:translate(-50%,-50%) rotate(-90deg)">SECTION 02</div>
  <div class="ph" id="p8" style="left:43px;top:21.8px;width:263.1px;height:101.5px;background:linear-gradient(180deg,#d6dada 0%,#d0d4d4 40%,#b0b0ac 100%)"><div style="left:28px;top:0px;width:82px;height:40px;background:#b0aca4;border-radius:40%;filter:blur(4px);"></div><div style="left:0px;top:0px;width:30px;height:101.5px;background:#7e7264;filter:blur(1.5px);"></div><div style="left:0px;top:20px;width:30px;height:6px;background:#9a8a70;filter:blur(1px);"></div><div style="left:0px;top:50px;width:30px;height:6px;background:#8a7a68;filter:blur(1px);"></div><div style="left:4px;top:60px;width:20px;height:41.5px;background:#6a6054;filter:blur(1.5px);"></div><div style="left:30px;top:0px;width:10px;height:101.5px;background:#7a6a5a;filter:blur(1.5px);"></div><div style="left:40px;top:20px;width:22px;height:81.5px;background:#5e5246;border-radius:30%;filter:blur(2px);"></div><div style="left:55px;top:0px;width:10px;height:101.5px;background:#7a7a74;filter:blur(1px);"></div><div style="left:54px;top:29px;width:88px;height:72.5px;background:#d4d4d2;filter:blur(1.2px);"></div><div style="left:60px;top:45px;width:20px;height:9px;background:#8a9090;filter:blur(1px);"></div><div style="left:90px;top:45px;width:25px;height:9px;background:#8a9090;filter:blur(1px);"></div><div style="left:120px;top:45px;width:20px;height:9px;background:#8a9090;filter:blur(1px);"></div><div style="left:60px;top:63px;width:20px;height:9px;background:#8a9090;filter:blur(1px);"></div><div style="left:90px;top:63px;width:25px;height:9px;background:#8a9090;filter:blur(1px);"></div><div style="left:60px;top:82px;width:20px;height:9px;background:#8a9090;filter:blur(1px);"></div><div style="left:90px;top:82px;width:25px;height:9px;background:#8a9090;filter:blur(1px);"></div><div style="left:130px;top:0px;width:20px;height:40px;background:#c8c8c4;border-radius:30%;filter:blur(2px);"></div><div style="left:190px;top:0px;width:40px;height:101.5px;background:#a8a6a2;filter:blur(4px);"></div><div style="left:205px;top:10px;width:20px;height:91.5px;background:#6a6660;border-radius:30%;filter:blur(3px);"></div><div style="left:236px;top:40px;width:27.1px;height:61.5px;background:#dcd4cc;filter:blur(1.2px);"></div><div style="left:246px;top:26px;width:17.1px;height:29px;background:#5a5450;filter:blur(1.2px);"></div><div style="left:222px;top:50px;width:30px;height:10px;background:#5a5048;border-radius:20%;filter:blur(1.2px);transform:rotate(-65deg)"></div><div style="left:65px;top:72px;width:42px;height:29.5px;background:#7e8e9c;border-radius:35% 35% 0 0;filter:blur(1.2px);"></div><div style="left:79px;top:61px;width:14px;height:11px;background:#2a2420;border-radius:45%;filter:blur(1px);"></div><div style="left:80px;top:66px;width:12px;height:13px;background:#b09080;border-radius:45%;filter:blur(0.8px);"></div><div style="left:128px;top:48px;width:87px;height:53.5px;background:#181818;border-radius:45% 45% 0 0;filter:blur(1.2px);"></div><div style="left:121px;top:70px;width:100px;height:31.5px;background:#181818;border-radius:20%;filter:blur(1.2px);"></div><div style="left:147px;top:14px;width:42px;height:48px;background:#141414;border-radius:45%;filter:blur(1.2px);"></div><div style="left:152px;top:1px;width:32px;height:16px;background:#1a1a1a;border-radius:45%;filter:blur(1px);"></div><div style="left:159px;top:17px;width:21px;height:26px;background:#d0a898;border-radius:45%;filter:blur(1px);"></div><div style="left:145px;top:56px;width:51px;height:45.5px;background:#8a8a8a;border-radius:30% 30% 0 0;filter:blur(1.2px);"></div></div><!--/p8-->
  <div class="ttl" style="right:29.9px;top:133.3px;text-align:right;transform-origin:100% 0">MEET OUR<br>TEAM</div>
  <div class="b" style="right:114.7px;top:135.8px;text-align:right">Ansucipit eros iste metus auctor id dapibus quam aliquam sied pretium viera</div>
  <div class="p" style="right:114.7px;top:147.2px;text-align:right;line-height:7px">Ansucipit eros iste metus auctor id dapibus quam aliquam sied pretium viverra<br>ornare praesent turpis antes dolor elementum ipsum volutpat</div>
  <div class="ft">© 2021 <b style="color:#bdbdbd">ABORANE</b> &nbsp;all rights reserved</div>
</div>

<!-- SLIDE 9 -->
<div class="dk" style="left:1136px;top:547px;width:15.5px;height:182.5px;background:#0d3039;box-shadow:1px 2px 3px rgba(0,10,15,.4)"></div>
<div class="s" style="left:822px;top:544px;width:314px;height:186px">
  <div class="lg" style="left:0;top:0;width:90px;height:124.7px"></div>
  <div class="logo"></div>
  <div class="nav" style="left:28px">Profile</div><div class="nav" style="left:52px">Team</div><div class="nav" style="left:75px">Gallery</div><div class="nav" style="left:99px">Data</div>
  <div class="ph" id="p9" style="left:28px;top:29.2px;width:106.3px;height:127.3px;background:linear-gradient(180deg,#3e2e22 0%,#5e4030 12%,#6a4830 30%,#3a2a20 40%,#2a2018 100%)"><div style="left:8px;top:0px;width:36px;height:13px;background:#8a8070;filter:blur(1.5px);"></div><div style="left:90px;top:0px;width:16.3px;height:14px;background:#a09a88;filter:blur(1.5px);"></div><div style="left:91px;top:50px;width:15.3px;height:36px;background:#a09060;filter:blur(1.5px);"></div><div style="left:0px;top:45px;width:10px;height:50px;background:#4a3228;filter:blur(2px);"></div><div style="left:40px;top:4px;width:30px;height:22px;background:#241a14;border-radius:40%;filter:blur(1px);"></div><div style="left:45px;top:18px;width:23px;height:27px;background:#9a7050;border-radius:45%;filter:blur(1px);"></div><div style="left:45px;top:26px;width:23px;height:5px;background:#1a1a1a;border-radius:30%;filter:blur(0.5px);"></div><div style="left:48px;top:36px;width:17px;height:13px;background:#3a2a20;border-radius:40%;filter:blur(1px);"></div><div style="left:4px;top:43px;width:42px;height:63px;background:#a8a8a0;border-radius:30% 30% 10% 10%;filter:blur(1.2px);"></div><div style="left:60px;top:44px;width:30px;height:60px;background:#a8a8a0;border-radius:30% 30% 10% 10%;filter:blur(1.2px);"></div><div style="left:33px;top:50px;width:29px;height:62px;background:#3a3028;border-radius:20%;filter:blur(1px);"></div><div style="left:8px;top:98px;width:18px;height:17px;background:#9a6a4a;border-radius:40%;filter:blur(1px);"></div><div style="left:14px;top:108px;width:28px;height:19px;background:#9a6a4a;border-radius:40%;filter:blur(1px);"></div><div style="left:50px;top:108px;width:26px;height:17px;background:#9a6a4a;border-radius:40%;filter:blur(1px);"></div><div style="left:30px;top:112px;width:50px;height:15.3px;background:#2a2420;border-radius:20%;filter:blur(1px);"></div></div><!--/p9-->
  <div class="ttl" style="left:157.1px;top:47px;font-size:13.2px;line-height:14px;transform:scaleY(1.06)">THE LEADER</div>
  <div class="b" style="left:157.1px;top:73.4px;line-height:7.3px"><div style="width:134.8px;white-space:nowrap;text-align:justify;text-align-last:justify;white-space:normal;word-spacing:-0.4px">Ansucipit eros iste metus auctor id dapibus quam aliquam sied</div><div style="width:134.8px;white-space:nowrap;text-align:justify;text-align-last:justify;white-space:normal;word-spacing:-0.4px">pretium viverra ornare praesent turpis antes dolor elementum</div><div style="width:134.8px;white-space:nowrap;">ipsum volutpat tincidunt dapibus integer mollis</div></div>
  <div class="p" style="left:157.1px;top:100px;line-height:7.35px"><div style="width:134.8px;white-space:nowrap;text-align:justify;text-align-last:justify;white-space:normal;word-spacing:-0.4px">Ansucipit eros iste metus auctor id dapibus quam aliquam sied pretium</div><div style="width:134.8px;white-space:nowrap;text-align:justify;text-align-last:justify;white-space:normal;word-spacing:-0.4px">viverra ornare praesent turpis antes dolor elementum ipsum volutpat</div><div style="width:134.8px;white-space:nowrap;text-align:justify;text-align-last:justify;white-space:normal;word-spacing:-0.4px">tincidunt pretium viverra ornare praesent turpis antes dolor</div><div style="width:134.8px;white-space:nowrap;text-align:justify;text-align-last:justify;white-space:normal;word-spacing:-0.4px">elementum ipsum volutpat tincidunt pretium viverra ornare praesent</div><div style="width:134.8px;white-space:nowrap;">turpis antes dolor elementum ipsum volutpat tincidunt.</div></div>
  <div class="ft">© 2021 <b style="color:#bdbdbd">ABORANE</b> &nbsp;all rights reserved</div>
</div>
<div class="a" style="left:1143.5px;top:669px;transform:translate(-50%,-50%) rotate(90deg);font-size:8px;line-height:9px;font-weight:bold;color:#e4eaea;white-space:nowrap;letter-spacing:0.8px">ALEXA&nbsp;ABORANE</div>

</body></html>
